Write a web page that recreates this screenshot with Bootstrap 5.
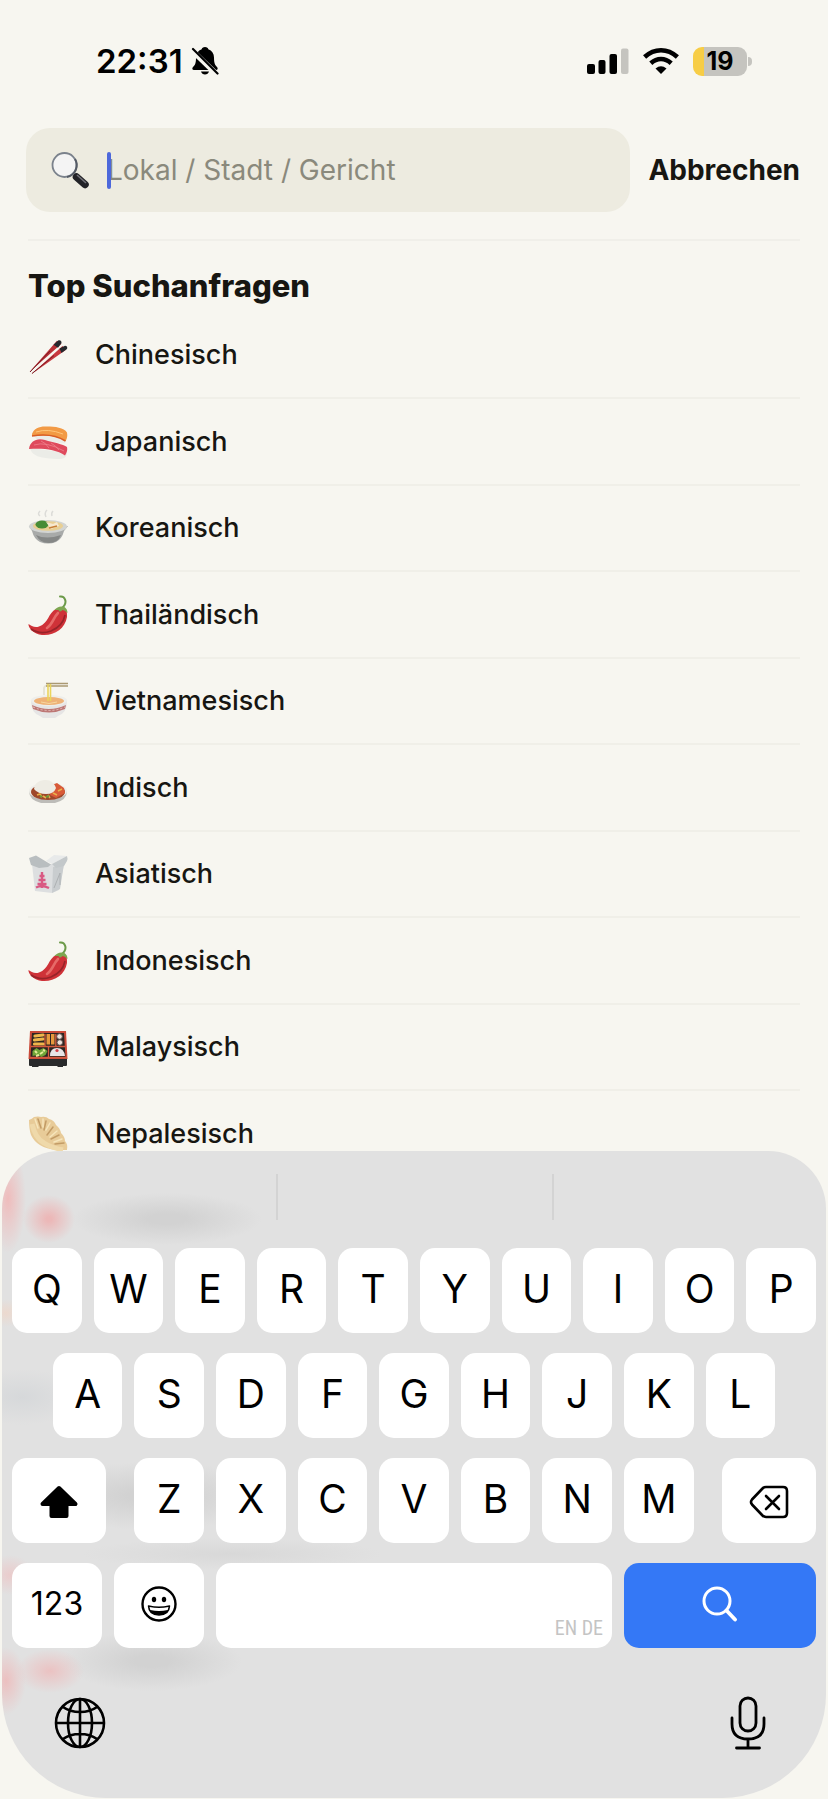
<!DOCTYPE html>
<html lang="de">
<head>
<meta charset="utf-8">
<meta name="viewport" content="width=device-width, initial-scale=1">
<title>Suche</title>
<link href="https://cdn.jsdelivr.net/npm/bootstrap@5.3.0/dist/css/bootstrap.min.css" rel="stylesheet">
<style>
  body { background: #f7f6f0; color: #171612; font-family: Inter, "Liberation Sans", sans-serif; }
  svg { display: block; flex: none; }
  .status-bar { height: 128px; padding: 0 81px 6px 96px; color: #000; }
  .clock { font-size: 33px; line-height: 40px; font-weight: 600; }
  .indicators { gap: 14px; }
  .battery { position: relative; width: 54px; height: 29px; border-radius: 9px; background: linear-gradient(90deg, #f7cd46 11px, #c5c4bf 11px); font-size: 25px; line-height: 29px; font-weight: 700; }
  .battery::after { content: ""; position: absolute; left: 55px; top: 10px; width: 4px; height: 9px; border-radius: 0 4px 4px 0; background: #c5c4bf; }
  .side { margin: 0 28px; }
  .search-row { margin: 0 28px 0 26px; padding-bottom: 27px; gap: 18px; }
  .search-box { height: 84px; border-radius: 24px; background: #edebe0; padding: 0 24px; gap: 16px; }
  .field::before { content: ""; position: absolute; left: 0; top: 3px; width: 4px; height: 37px; border-radius: 2px; background: #4d68db; }
  .field input { width: 100%; height: 42px; border: 0; padding: 0; background: none; outline: none; font-size: 29px; line-height: 42px; }
  .field input::placeholder { color: #8a897c; opacity: 1; font-size: 28px; }
  .cancel { border: 0; background: none; padding: 0; font-size: 28px; font-weight: 700; color: #171612; }
  .top-title { border-top: 2px solid #f0efe9; padding-top: 25px; margin-bottom: 7px; font-size: 31px; line-height: 40px; font-weight: 800; }
  .top-list a { height: 86px; gap: 27px; color: inherit; text-decoration: none; font-size: 27px; line-height: 32px; font-weight: 500; border-bottom: 2px solid #f0efe8; }
  .top-list li:nth-child(even) a { height: 87px; }

  .keyboard { position: relative; z-index: 1; margin: -27px 2px 1px; padding: 0 10px; border-radius: 58px 58px 104px 104px; overflow: hidden; color: #000;
    background:
      radial-gradient(ellipse 18px 54px at 6px 48px, #efbcbc, transparent),
      radial-gradient(ellipse 26px 24px at 47px 68px, #ecb8b8 10%, transparent),
      radial-gradient(ellipse 95px 26px at 165px 68px, #d2d2d2 20%, transparent),
      radial-gradient(ellipse 20px 14px at 4px 162px, #ecd9ce, transparent),
      radial-gradient(ellipse 60px 28px at 20px 246px, #d6d8da, transparent),
      radial-gradient(ellipse 120px 34px at 150px 345px, #d2d2d2 20%, transparent),
      radial-gradient(ellipse 24px 20px at 8px 424px, #eacccc, transparent),
      radial-gradient(ellipse 150px 16px at 230px 403px, #d8d8d8, transparent),
      radial-gradient(ellipse 20px 34px at 4px 530px, #ecc0c0, transparent),
      radial-gradient(ellipse 34px 22px at 48px 520px, #ebc2c2, transparent),
      radial-gradient(ellipse 90px 30px at 150px 510px, #d2d2d2 20%, transparent),
      #e1e1e1; }
  .suggestions { height: 97px; padding: 23px 0 0; margin: 0 -12px; }
  .suggestions div { height: 46px; }
  .suggestions div + div { border-left: 2px solid #d3d3d3; }
  .keys { display: grid; grid-template-columns: repeat(20, minmax(0, 1fr)); gap: 20px 12px; }
  .key { grid-column: span 2; display: flex; align-items: center; justify-content: center; height: 85px; width: 100%; border: 0; border-radius: 15px; background: #fff; color: #000; padding: 0 0 4px; font-size: 39px; line-height: 48px; }
  .key-a { grid-column: 2 / span 2; }
  .key-shift { grid-column: 1 / span 3; width: auto; margin-right: 16px; padding: 2px 0 0; }
  .key-back { grid-column: span 3; width: auto; margin-left: 16px; padding: 2px 0 0; }
  .key-pair { grid-column: 1 / span 5; gap: 12px; }
  .key-num { font-size: 32px; }
  .key-space { grid-column: span 10; align-items: flex-end; justify-content: flex-end; padding: 0 9px 5px; color: #c4c4c4; font-family: "Liberation Sans Narrow", "Roboto Condensed", "DejaVu Sans Condensed", sans-serif; font-size: 20px; line-height: 30px; }
  .key-go { grid-column: span 5; background: #3478f6; }
  .bottom-bar { height: 150px; padding: 0 42px; }
  .bottom-bar button { border: 0; background: none; padding: 0; }
</style>
</head>
<body>
<div class="min-vh-100 d-flex flex-column">
  <header>
    <div class="status-bar d-flex align-items-center justify-content-between">
      <div class="d-flex align-items-center gap-2">
        <span class="clock">22:31</span>
        <svg width="28" height="30" viewBox="0 0 28 30" role="img" aria-label="Stumm"><path d="M14 1c-2 0-3 1-3.300 2.200C7 4.500 5 7.500 5 11.500c0 6-1 7.500-3 9.500-1.200 1.300-.8 3 1 3h22c1.800 0 2.200-1.700 1-3-2-2-3-3.500-3-9.500 0-4-2-7-5.700-8.300C17 2 16 1 14 1zM10 25.500h8c-.6 2-2 3-4 3s-3.400-1-4-3z"/><path d="M1.500 5l25 24" stroke="#f7f6f0" stroke-width="5.500"/><path d="M2 3l24.500 24.500" stroke="#000" stroke-width="2.200" stroke-linecap="round"/></svg>
      </div>
      <div class="indicators d-flex align-items-center">
        <svg width="42" height="28" viewBox="0 0 42 28" role="img" aria-label="Signal"><rect x="0" y="17" width="8" height="10" rx="2"/><rect x="11.500" y="13" width="7" height="14" rx="2"/><rect x="22.500" y="7" width="7.500" height="20" rx="2"/><rect x="34" y="1.500" width="7.500" height="25.500" rx="2" fill="#c5c4bf"/></svg>
        <svg width="36" height="28" viewBox="0 0 36 28" fill="none" stroke="#000" stroke-width="4.600" role="img" aria-label="WLAN"><path d="M1.600 10Q9 3.200 18 3.200T34.400 10"/><path d="M7.800 16.200Q12.500 12 18 12T28.200 16.200"/><path d="M12.500 21.500Q18 17 23.500 21.500L18 27z" fill="#000" stroke="none"/></svg>
        <div class="battery text-center">19</div>
      </div>
    </div>
    <form class="search-row d-flex align-items-center">
      <label class="search-box d-flex align-items-center flex-grow-1" for="q">
        <svg width="41" height="40" viewBox="0 0 41 40" aria-hidden="true"><path d="M24 25l5 4" stroke="#666" stroke-width="3"/><path d="M26.500 27L35 34.500" stroke="#222227" stroke-width="7.500" stroke-linecap="round"/><path d="M27 25l9 8" stroke="#73737a" stroke-width="1.500"/><circle cx="14.500" cy="15" r="12" fill="#f4f4f4" stroke="#7b828c" stroke-width="1.800"/><path d="M25 9a12 12 0 0 1-8 18" stroke="#555b66" stroke-width="2" fill="none"/></svg>
        <span class="field position-relative flex-grow-1"><input id="q" type="text" placeholder="Lokal / Stadt / Gericht" aria-label="Suche"></span>
      </label>
      <button type="button" class="cancel">Abbrechen</button>
    </form>
  </header>
  <main class="side">
    <h1 class="top-title">Top Suchanfragen</h1>
    <ul class="top-list list-unstyled mb-0">
      <li><a href="#" class="d-flex align-items-center"><svg width="40" height="48" viewBox="0 0 40 48"><path d="M1.500 41L29 9.800 33.500 12.800z" fill="#b92f35"/><path d="M25.500 13.800L30.500 9.300q3-.6 3 2.600L30 16.800z" fill="#25282d"/><path d="M3 43.500L34.500 15l3.500 3.700z" fill="#c8383e"/><path d="M31.500 17.500L37 14.800q3 .4 2 3.200L33.500 22z" fill="#25282d"/><path d="M2 41l20-21M4 42.500l22-18" stroke="#7b1d25" stroke-width="1"/></svg><span>Chinesisch</span></a></li>
      <li><a href="#" class="d-flex align-items-center"><svg width="40" height="48" viewBox="0 0 40 48"><path d="M5 16q2 6 10 7.500l22 2 2-6z" fill="#ecece8"/><path d="M4 16c2-6 8-8 15-7.500 8 0 17 1 20 6q1 5-1.500 8.500C28 17 16 17 4 18z" fill="#f29a45"/><path d="M4 18c12-2 24-1 33.500 5" stroke="#d95d25" stroke-width="1.500" fill="none"/><path d="M8 14q12-4 27 2" stroke="#ffc57a" fill="none"/><path d="M2 30q2 8 12 9.500 10 2 20 1.300 5-1 5-6z" fill="#ebece7"/><path d="M1 31C2 23 9 19.500 17 22c8 2.500 18 4 22 7q1 4-2 8.500C28 31 14 30 1 31z" fill="#df4a5d"/><path d="M6 27q12-4 30 6M13 23q5 2 8 7M23 25q5 3 8 7" stroke="#f08a94" stroke-width=".7" fill="none"/></svg><span>Japanisch</span></a></li>
      <li><a href="#" class="d-flex align-items-center"><svg width="40" height="48" viewBox="0 0 40 48"><path d="M12 12q-3-2 0-5M18 13q-2-4 1-7M24 12q-1-3 1-5" stroke="#dcdcd8" stroke-width="1.500" fill="none"/><path d="M1 22h39l-4 5q-2 8-8 11-8 3-16 0-6-3-8-11z" fill="#a8aaa9"/><path d="M8 31q10 5 25 0-3 8-12 8T8 31z" fill="#858786"/><ellipse cx="20" cy="22.500" rx="19" ry="6.500" fill="#d2d4d2"/><ellipse cx="20" cy="22" rx="15" ry="4.800" fill="#e8cf93"/><ellipse cx="14" cy="20.500" rx="6.500" ry="4" fill="#478c36"/><path d="M18 18l7 2 4-2 2 4-8 3z" fill="#f6e9d0"/><path d="M21 24l8-2" stroke="#c77f36" stroke-width="1.500"/></svg><span>Koreanisch</span></a></li>
      <li><a href="#" class="d-flex align-items-center"><svg width="40" height="48" viewBox="0 0 40 48"><path d="M33 18Q39 13 37 8.500 36 5 32 5.500" stroke="#6c9a49" stroke-width="2" fill="none" stroke-linecap="round"/><path d="M28 18C20 22 21 32 11 35.500 7 37 3 35 .5 33 0 37 6 43 14 44c12 1 23-6 25-18 0-4 0-7-2-8z" fill="#cf3238"/><path d="M30 22c-5 5-5 11-11 15" stroke="#e66a68" stroke-width="2.600" fill="none" stroke-linecap="round"/><path d="M3 38q9 6 20 2 12-5 14-16" stroke="#982329" stroke-width="1.600" fill="none"/><path d="M26.500 19q4-5 10-3 3 2 3 6-3-3-5-3-3 3-4 0z" fill="#7ea650"/></svg><span>Thailändisch</span></a></li>
      <li><a href="#" class="d-flex align-items-center"><svg width="40" height="48" viewBox="0 0 40 48"><path d="M16 18V11q1-3 6-3" stroke="#e6e3d5" stroke-width="2" fill="none"/><path d="M18 6.500h22M18 9h22" stroke="#aa9972" stroke-width="1.500"/><path d="M3 24q0 12 9 15l3 2h12l3-2q9-3 9-15z" fill="#e6e5e5"/><path d="M4 28q17 8 34 0l-1 4q-16 7-32 0z" fill="#bd7775"/><path d="M5 30q16 7 32 0" stroke="#e4c1bd" stroke-dasharray="2 2" fill="none"/><ellipse cx="21" cy="23.500" rx="18" ry="5.500" fill="#eeeeeb"/><ellipse cx="21" cy="24" rx="15" ry="4" fill="#eeb277"/><path d="M20 7v17M22.500 7v17" stroke="#ead55c" stroke-width="1.600"/><path d="M13 25q8 3 16 0" stroke="#f7d7a0" fill="none"/></svg><span>Vietnamesisch</span></a></li>
      <li><a href="#" class="d-flex align-items-center"><svg width="40" height="48" viewBox="0 0 40 48"><path d="M1 27q0 9 12 12h14q12-3 12-12z" fill="#bdbcb8"/><ellipse cx="20" cy="27" rx="19" ry="8.500" fill="#eeeeea"/><ellipse cx="20" cy="28" rx="17" ry="8" fill="#9e482b"/><path d="M24 21l5-2 7 5 1 5-9 5-6-3z" fill="#d85a38"/><path d="M6 25C7 18 12 16 18 16q7 0 10 8-2 6-10 6T6 25z" fill="#eeece4"/><path d="M9 31l3-1 2 3M15 32l3 2M20 31l2 3M25 29l4 2M30 27l4-2" stroke="#e9b24b" stroke-width="1.600" fill="none"/><path d="M12 32l2 1M18 33l3-1" stroke="#6d9938" stroke-width="2"/></svg><span>Indisch</span></a></li>
      <li><a href="#" class="d-flex align-items-center"><svg width="40" height="48" viewBox="0 0 40 48"><path d="M4 14h32l-5 26-7 3-17-2z" fill="#dddfe0"/><path d="M25 17l11-3-4 25-8 4z" fill="#c9cdcf"/><path d="M1 8l7-2.500 15 9L20 17l-9 1-8-3z" fill="#b9bec0"/><path d="M18 11l8-6 13 1-15 8z" fill="#e8eaea"/><path d="M39 6q1 3 0 5l-3 5-8 2-4-4z" fill="#c3c8ca"/><path d="M26 38l6-15 0 12" stroke="#adb1b3" fill="none"/><path d="M14 22v16M11.500 26h5M10.500 30h7M9.500 34h9M8 37.500q6-3 13 .5" stroke="#d95a83" stroke-width="2.400" fill="none"/></svg><span>Asiatisch</span></a></li>
      <li><a href="#" class="d-flex align-items-center"><svg width="40" height="48" viewBox="0 0 40 48"><path d="M33 18Q39 13 37 8.500 36 5 32 5.500" stroke="#6c9a49" stroke-width="2" fill="none" stroke-linecap="round"/><path d="M28 18C20 22 21 32 11 35.500 7 37 3 35 .5 33 0 37 6 43 14 44c12 1 23-6 25-18 0-4 0-7-2-8z" fill="#cf3238"/><path d="M30 22c-5 5-5 11-11 15" stroke="#e66a68" stroke-width="2.600" fill="none" stroke-linecap="round"/><path d="M3 38q9 6 20 2 12-5 14-16" stroke="#982329" stroke-width="1.600" fill="none"/><path d="M26.500 19q4-5 10-3 3 2 3 6-3-3-5-3-3 3-4 0z" fill="#7ea650"/></svg><span>Indonesisch</span></a></li>
      <li><a href="#" class="d-flex align-items-center"><svg width="40" height="48" viewBox="0 0 40 48"><path d="M1 35h38v7q0 1-1 1h-3v1h-5l-1-1H11l-1 1H4v-1H2q-1 0-1-1z" fill="#292a2b"/><path d="M2 8h36l1.500 28H.5z" fill="#c94a38"/><path d="M4 10h32l1.500 24h-35z" fill="#2d2522"/><path d="M7 13l8-1M6.500 17l8.500-1M6.500 21h9" stroke="#eeb54b" stroke-width="3.200" stroke-linecap="round"/><path d="M18.500 11h3.500v10.500h-3.500zM23 11h3.500v10.500H23z" fill="#e6983d"/><g fill="#eee3dc" stroke="#5c504c"><circle cx="31.500" cy="13.500" r="2.800"/><circle cx="31.800" cy="19.500" r="2.800"/></g><path d="M17 11v12M27.800 11v12M3 23.500h34M20.500 23.500V35M2 34.500h37" stroke="#d35a3e" stroke-width="1.300"/><path d="M4.500 28l4-3 3 2 4-2 4 3-2 4-4 2-4-2-5 1z" fill="#70a638"/><path d="M7 28l2 2M12 31l3-2M15 27l2 1M8 33l3-1" stroke="#e4ec98" stroke-width="2"/><path d="M22 33q0-8 7-8t8 8z" fill="#e8e4e5"/><circle cx="29" cy="27.500" r="1.600" fill="#d33e45"/></svg><span>Malaysisch</span></a></li>
      <li><a href="#" class="d-flex align-items-center"><svg width="40" height="48" viewBox="0 0 40 48"><path d="M1 10q3-1 5-3 4-1 7 0 5-1 8 2 5 1 7 6 4 3 5 8 4 4 4 8 3 3 2 9H28Q9 38 3 25 1 19 1 10z" fill="#e8cb98"/><path d="M4 14q3 14 12 19 8 5 19 7" stroke="#efd9aa" stroke-width="5" fill="none"/><path d="M10 9l3 9M18 11l-2 9M25 17l-6 8M31 25l-8 4M36 33l-9 1" stroke="#c39c66" stroke-width="1.500" fill="none" stroke-linecap="round"/><path d="M7 9l3 9M15 9v8M22 13l-4 7M29 21l-7 6M34 29l-8 3" stroke="#f6e5bb" stroke-width="1.500" stroke-linecap="round"/></svg><span>Nepalesisch</span></a></li>
    </ul>
  </main>

  <section class="keyboard" aria-label="Tastatur">
    <div class="suggestions d-flex"><div class="col-4"></div><div class="col-4"></div><div class="col-4"></div></div>
    <div class="keys">
      <button class="key">Q</button><button class="key">W</button><button class="key">E</button><button class="key">R</button><button class="key">T</button><button class="key">Y</button><button class="key">U</button><button class="key">I</button><button class="key">O</button><button class="key">P</button>
      <button class="key key-a">A</button><button class="key">S</button><button class="key">D</button><button class="key">F</button><button class="key">G</button><button class="key">H</button><button class="key">J</button><button class="key">K</button><button class="key">L</button>
      <button class="key key-shift" aria-label="Umschalt"><svg width="40" height="34" viewBox="0 0 40 34"><path d="M20 3L36.500 19H27.500v12h-15V19H3.500z" stroke="#000" stroke-width="4" stroke-linejoin="round"/></svg></button>
      <button class="key">Z</button><button class="key">X</button><button class="key">C</button><button class="key">V</button><button class="key">B</button><button class="key">N</button><button class="key">M</button>
      <button class="key key-back" aria-label="Löschen"><svg width="40" height="34" viewBox="0 0 40 34" fill="none" stroke="#000" stroke-width="2.600" stroke-linecap="round" stroke-linejoin="round"><path d="M17 2h17q4 0 4 4v22q0 4-4 4H17q-2 0-3.500-1.500L3 19.500q-2-2.500 0-5L13.500 3.500Q15 2 17 2z"/><path d="M17 11l13 13M30 11L17 24"/></svg></button>
      <div class="key-pair d-flex">
        <button class="key key-num">123</button>
        <button class="key" aria-label="Emoji"><svg width="36" height="36" viewBox="0 0 36 36"><circle cx="18" cy="18" r="16.500" fill="none" stroke="#000" stroke-width="2.400"/><ellipse cx="13" cy="13.500" rx="2.200" ry="2.700"/><ellipse cx="23" cy="13.500" rx="2.200" ry="2.700"/><path d="M7.500 20Q18 22.500 28.500 20 28 29 18 29T7.500 20z" stroke="#000" stroke-width="1.500" stroke-linejoin="round"/><path d="M8.500 21q9.500 2 19 0l-.8 3q-8.700 2-17.400 0z" fill="#fff"/></svg></button>
      </div>
      <button class="key key-space">EN DE</button>
      <button class="key key-go" aria-label="Suchen"><svg width="36" height="36" viewBox="0 0 36 36" fill="none" stroke="#fff" stroke-width="3" stroke-linecap="round"><circle cx="15" cy="15" r="13"/><path d="M24.500 24.500l8.500 9" stroke-width="3.800"/></svg></button>
    </div>
    <div class="bottom-bar d-flex align-items-center justify-content-between">
      <button aria-label="Sprache"><svg width="52" height="52" viewBox="0 0 52 52" fill="none" stroke="#000" stroke-width="2.600"><circle cx="26" cy="26" r="24"/><ellipse cx="26" cy="26" rx="12" ry="24"/><path d="M26 2v48M2 26h48M9 10q7 5 17 5t17-5M9 42q7-5 17-5t17 5"/></svg></button>
      <button aria-label="Diktat"><svg class="me-2" width="36" height="54" viewBox="0 0 36 54" fill="none" stroke="#000" stroke-width="2.800" stroke-linecap="round"><rect x="10" y="2" width="16" height="33" rx="8"/><path d="M2 22v6q0 15 16 15t16-15v-6M18 43v9M6.500 52h23"/></svg></button>
    </div>
  </section>
</div>
</body>
</html>
